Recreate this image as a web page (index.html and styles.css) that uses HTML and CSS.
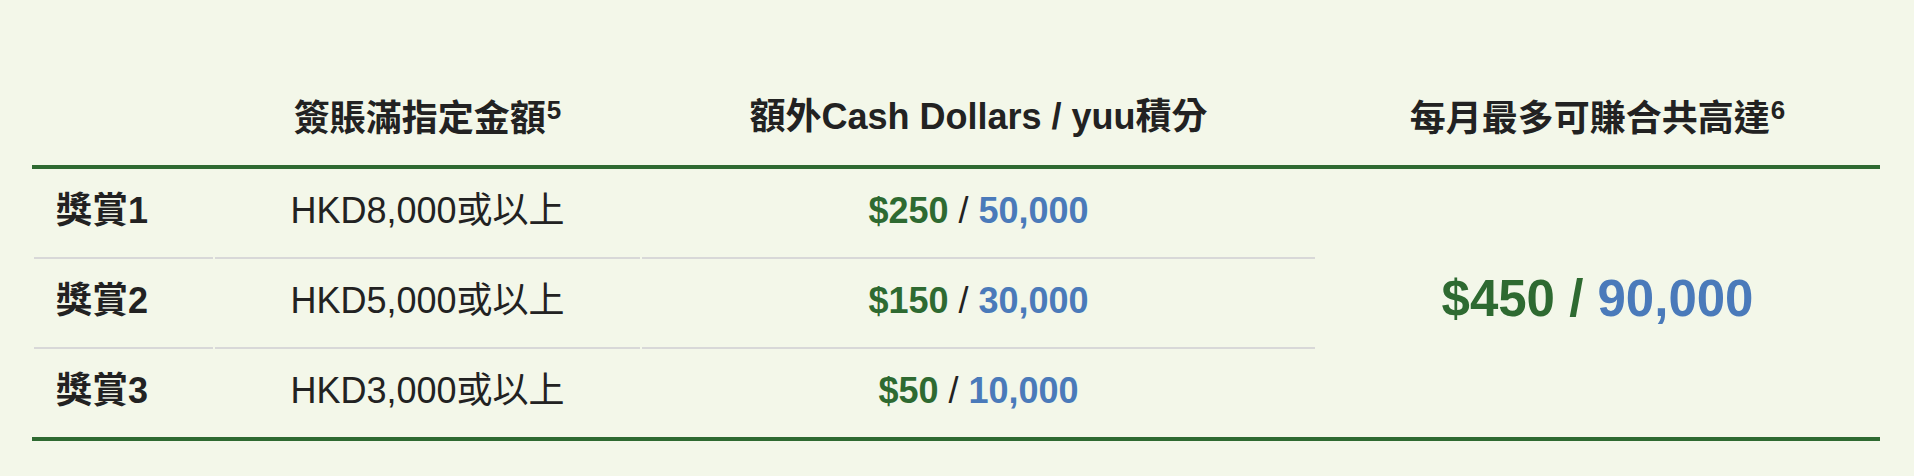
FILE: index.html
```html
<!DOCTYPE html>
<html lang="zh-Hant">
<head>
<meta charset="utf-8">
<title>獎賞</title>
<link rel="stylesheet" href="styles.css">
</head>
<body>
<div class="wrap">
  <div class="thead">
    <div class="th"></div>
    <div class="th"><span>簽賬滿指定金額<sup>5</sup></span></div>
    <div class="th"><span>額外Cash Dollars / yuu積分</span></div>
    <div class="th"><span>每月最多可賺合共高達<sup>6</sup></span></div>
  </div>
  <div class="tbody">
    <div class="td label line">獎賞1</div>
    <div class="td center line">HKD8,000或以上</div>
    <div class="td center line val"><span><span class="g">$250</span> / <span class="b">50,000</span></span></div>
    <div class="td total"><span><span class="g">$450 /</span> <span class="b">90,000</span></span></div>

    <div class="td label line">獎賞2</div>
    <div class="td center line">HKD5,000或以上</div>
    <div class="td center line val"><span><span class="g">$150</span> / <span class="b">30,000</span></span></div>

    <div class="td label">獎賞3</div>
    <div class="td center">HKD3,000或以上</div>
    <div class="td center val"><span><span class="g">$50</span> / <span class="b">10,000</span></span></div>
  </div>
</div>
</body>
</html>
```

FILE: styles.css
```css
html, body {
  margin: 0;
  padding: 0;
  background: #f3f7e9;
}

body {
  font-family: "Liberation Sans", "Noto Sans CJK TC", Arial, sans-serif;
  color: #222222;
  font-size: 36px;
  line-height: 1;
}

.wrap {
  width: 1848px;
  padding: 71px 34px 35px 32px;
}

.thead,
.tbody {
  display: grid;
  grid-template-columns: 179px 425px 673px 561px;
  column-gap: 2px;
  padding: 0 2px;
  border-bottom: 4px solid #2e6a31;
}

.th {
  height: 94px;
  display: flex;
  align-items: center;
  justify-content: center;
  font-weight: bold;
  padding-bottom: 2px;
  box-sizing: border-box;
  white-space: nowrap;
}

.th sup {
  font-size: 26px;
  line-height: 1;
  vertical-align: 12px;
  margin-left: 1px;
}

.tbody {
  grid-template-rows: 90px 90px 88px;
}

.td {
  display: flex;
  align-items: center;
  padding-bottom: 5px;
  box-sizing: border-box;
  white-space: nowrap;
}

.line {
  border-bottom: 2px solid #d8d8d8;
}

.label {
  font-weight: bold;
  padding-left: 22px;
}

.center {
  justify-content: center;
}

.val .g,
.val .b {
  font-weight: bold;
}

.g {
  color: #2e6a31;
}

.b {
  color: #4a7aba;
}

.total {
  grid-column: 4;
  grid-row: 1 / span 3;
  justify-content: center;
  font-size: 51px;
  font-weight: bold;
  padding-bottom: 10px;
}
```
